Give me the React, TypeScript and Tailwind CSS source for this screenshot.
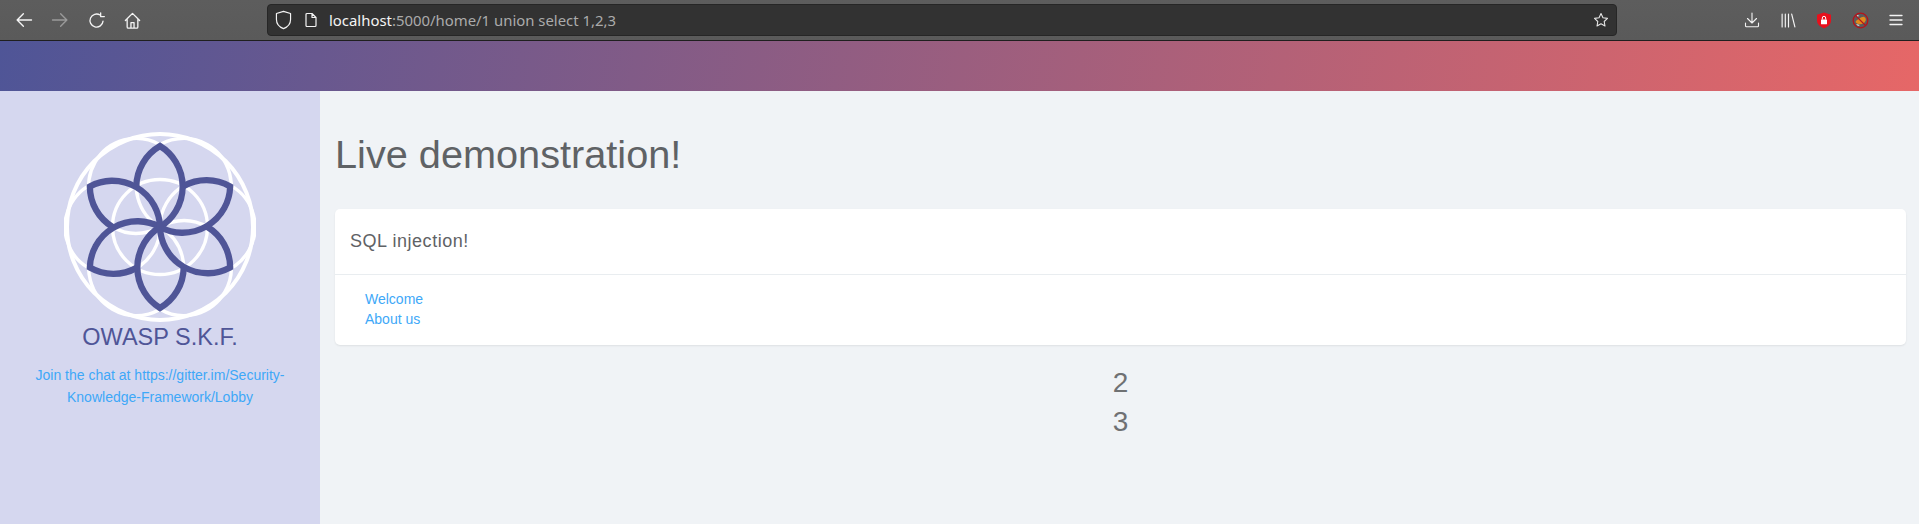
import React from "react";

const D = "M-23.700 -40.700A47.500 47.500 0 0 1 0 -81A47.500 47.500 0 0 1 0 0";

function Logo() {
  const centers = [0, 60, 120, 180, 240, 300];
  return (
    <svg width="192" height="192" viewBox="-96 -96 192 192" className="block">
      <g fill="none" stroke="#ffffff" strokeWidth="3.400">
        <circle r="93" strokeWidth="4" />
        <circle r="47.500" />
        {centers.map((a) => (
          <circle key={a} cx={47.5 * Math.sin((a * Math.PI) / 180)} cy={-47.5 * Math.cos((a * Math.PI) / 180)} r="47.500" transform="rotate(30)" />
        ))}
      </g>
      <g fill="none" stroke="#4f5597" strokeWidth="6.300" strokeMiterlimit="10">
        {centers.map((a) => (
          <path key={a} d={D} transform={`rotate(${a})`} />
        ))}
      </g>
    </svg>
  );
}

const Ic = ({ children, w = 20 }: { children: React.ReactNode; w?: number }) => (
  <svg width={w} height={w} viewBox="0 0 16 16" fill="none" stroke="currentColor" strokeWidth="1.1" strokeLinecap="round" strokeLinejoin="round">
    {children}
  </svg>
);

function Btn({ children, cls = "text-[#f4f4f4]" }: { children: React.ReactNode; cls?: string }) {
  return <div className={`w-9 flex items-center justify-center ${cls}`}>{children}</div>;
}

export default function App() {
  return (
    <div className="h-[524px] overflow-hidden flex flex-col bg-[#f0f3f6] font-['Liberation_Sans',Arial,sans-serif]">
      <div className="h-[41px] shrink-0 flex items-center pl-[6px] pr-[5px] border-b border-[#1f1f1f] bg-[linear-gradient(#5d5d5d,#5a5a5a)]">
        <Btn>
          <Ic><path d="M14 8H2.500M7.500 3 2.500 8l5 5" /></Ic>
        </Btn>
        <Btn cls="text-[#9a9a9a]">
          <Ic><path d="M2 8h11.500M8.500 3l5 5-5 5" /></Ic>
        </Btn>
        <Btn>
          <Ic w={19}><path d="M13.500 8.500A5.500 5.500 0 1 1 11 3.400M11.500 1.500v3.200H14.600" /></Ic>
        </Btn>
        <Btn>
          <Ic w={19}><path d="M2 8l6-6 6 6M3.500 7v6.500a1 1 0 0 0 1 1h7a1 1 0 0 0 1-1V7M6.700 14.500V9.800h2.600v4.700" /></Ic>
        </Btn>
        <div className="ml-[117px] w-[1350px] h-[32px] flex items-center rounded-[4px] border border-[#262626] bg-[#323232] text-[#f4f4f4]">
          <div className="ml-[7px] w-4 flex justify-center">
            <svg width="19" height="20" viewBox="0 0 16 17" fill="none" stroke="currentColor" strokeWidth="1" strokeLinejoin="round" className="shrink-0">
              <path d="M8 1.200 14 3v5c0 4-3 6.600-6 7.800C5 14.600 2 12 2 8V3z" />
            </svg>
          </div>
          <div className="ml-[12px] w-4 flex justify-center">
            <svg width="14" height="16" viewBox="0 0 14 16" fill="none" stroke="currentColor" strokeWidth="1.200" strokeLinejoin="round">
              <path d="M3 1.500h5l4 4v8a1 1 0 0 1-1 1H3a1 1 0 0 1-1-1v-11a1 1 0 0 1 1-1zM8 1.500v4h4" />
            </svg>
          </div>
          <span className="ml-[10px] font-['Noto_Sans',sans-serif] text-[14.900px] whitespace-pre">
            localhost<span className="text-[#ababab]">:5000/home/1 union select 1,2,3</span>
          </span>
          <div className="ml-auto mr-[7px] w-4 flex justify-center text-[#e8e8e8]">
            <svg width="18" height="18" viewBox="0 0 18 18" fill="none" stroke="currentColor" strokeWidth="1.200" strokeLinejoin="round">
              <path d="M9 1.800l2.200 4.700 5.100.7-3.700 3.500.9 5.100L9 13.300l-4.500 2.500.9-5.100L1.700 7.200l5.100-.7z" />
            </svg>
          </div>
        </div>
        <div className="ml-auto flex">
          <Btn>
            <Ic w={16}><path d="M8 1v10M3.500 6.500 8 11l4.500-4.500M1.500 11v2.700a1 1 0 0 0 1 1h11a1 1 0 0 0 1-1V11" /></Ic>
          </Btn>
          <Btn>
            <Ic w={17}><path d="M2 2v12M5 2v12M8 2v12M11 2l3 12" /></Ic>
          </Btn>
          <Btn>
            <svg width="16" height="17" viewBox="0 0 16 17">
              <path d="M8 .6l7 2.100v6c0 3.600-3.500 6.200-7 7.700C4.500 14.900 1 12.300 1 8.700v-6z" fill="#e8101c" />
              <rect x="5" y="7.500" width="6" height="4.800" rx=".6" fill="#fff" />
              <path d="M6.300 7.500V6a1.700 1.700 0 0 1 3.400 0v1.500" fill="none" stroke="#fff" strokeWidth="1" />
            </svg>
          </Btn>
          <Btn>
            <svg width="17" height="17" viewBox="0 0 17 17">
              <path d="M3.500 5l2-2 2 1zM4 12l2 2 2-1z" fill="#e6e6e6" />
              <path d="M3.500 10c.5-2 2.500-2.500 4-3.500 2-1.500 4-2.500 5.500-1 1.500 1.500.8 4.500-1.500 5.800-2.500 1.400-6.500 1.200-8-1.300z" fill="#e08a1c" />
              <circle cx="8.500" cy="8.500" r="7.300" fill="none" stroke="#b5121b" strokeWidth="1.300" />
              <path d="M3.500 3.500l10 10" stroke="#b5121b" strokeWidth="1.100" />
            </svg>
          </Btn>
          <Btn>
            <svg width="14" height="12" viewBox="0 0 14 12" stroke="currentColor" strokeWidth="1.300" strokeLinecap="round">
              <path d="M1 1.500h12M1 6h12M1 10.500h12" />
            </svg>
          </Btn>
        </div>
      </div>

      <div className="h-[50px] shrink-0 bg-[linear-gradient(100deg,#4f5597,#e66767)]" />

      <div className="flex-1 flex min-h-0">
        <aside className="w-[320px] shrink-0 bg-[#d5d7ef] flex flex-col items-center pt-[40px]">
          <Logo />
          <h2 className="text-[23.500px] leading-[28px] text-[#4f5597]">OWASP S.K.F.</h2>
          <a className="mt-[14px] w-[270px] text-center text-[14px] leading-[21.600px] text-[#3ea8f8]">
            Join the chat at https://gitter.im/Security-Knowledge-Framework/Lobby
          </a>
        </aside>
        <main className="flex-1 pl-[15px] pr-[13px] text-[#5f6265]">
          <h1 className="pt-[37px] text-[39.700px] leading-[52px]">Live demonstration!</h1>
          <section className="mt-[29px] h-[136px] rounded-[5px] bg-white shadow-[0_1px_2px_rgba(0,0,0,0.08)] flex flex-col">
            <div className="h-[66px] shrink-0 flex items-center px-[15px] border-b border-[#e9edf0] text-[18px] tracking-[0.53px]">
              SQL injection!
            </div>
            <div className="pl-[30px] pt-[14px] text-[14px] leading-[20px] text-[#3ea8f8]">
              <div>Welcome</div>
              <div>About us</div>
            </div>
          </section>
          <div className="mt-[18px] text-center text-[28px] leading-[39px] text-[#6f7173]">
            <div>2</div>
            <div>3</div>
          </div>
        </main>
      </div>
    </div>
  );
}
